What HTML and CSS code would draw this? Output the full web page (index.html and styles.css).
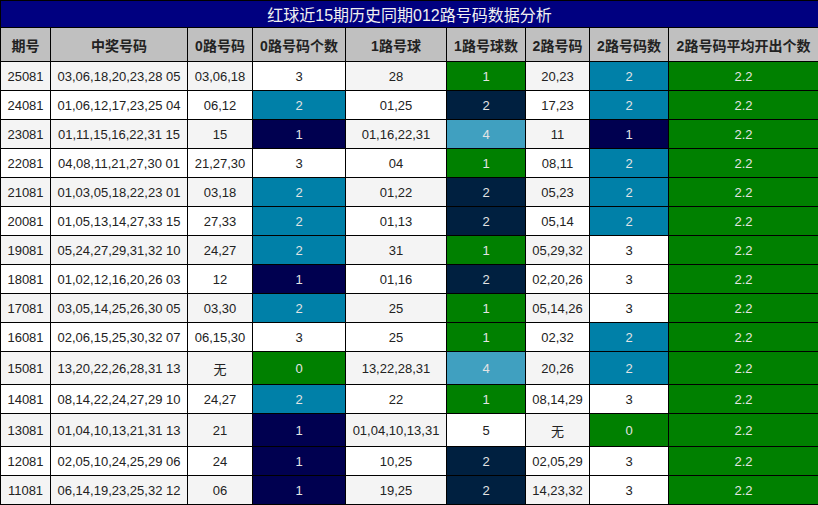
FILE: index.html
```html
<!DOCTYPE html>
<html>
<head>
<meta charset="utf-8">
<link rel="stylesheet" href="styles.css">
</head>
<body>
<table class="grid">
<colgroup>
<col class="w1"><col class="w2"><col class="w3"><col class="w4"><col class="w5"><col class="w6"><col class="w7"><col class="w8"><col class="w9">
</colgroup>
<thead>
<tr><th class="title" colspan="9">红球近15期历史同期012路号码数据分析</th></tr>
<tr class="head"><th>期号</th><th>中奖号码</th><th>0路号码</th><th>0路号码个数</th><th>1路号球</th><th>1路号球数</th><th>2路号码</th><th>2路号码数</th><th>2路号码平均开出个数</th></tr>
</thead>
<tbody>
<tr class="odd"><td>25081</td><td>03,06,18,20,23,28 05</td><td>03,06,18</td><td class="w">3</td><td>28</td><td class="g">1</td><td>20,23</td><td class="t">2</td><td class="g">2.2</td></tr>
<tr><td>24081</td><td>01,06,12,17,23,25 04</td><td>06,12</td><td class="t">2</td><td>01,25</td><td class="d">2</td><td>17,23</td><td class="t">2</td><td class="g">2.2</td></tr>
<tr class="odd"><td>23081</td><td>01,11,15,16,22,31 15</td><td>15</td><td class="n">1</td><td>01,16,22,31</td><td class="l">4</td><td>11</td><td class="n">1</td><td class="g">2.2</td></tr>
<tr><td>22081</td><td>04,08,11,21,27,30 01</td><td>21,27,30</td><td class="w">3</td><td>04</td><td class="g">1</td><td>08,11</td><td class="t">2</td><td class="g">2.2</td></tr>
<tr class="odd"><td>21081</td><td>01,03,05,18,22,23 01</td><td>03,18</td><td class="t">2</td><td>01,22</td><td class="d">2</td><td>05,23</td><td class="t">2</td><td class="g">2.2</td></tr>
<tr><td>20081</td><td>01,05,13,14,27,33 15</td><td>27,33</td><td class="t">2</td><td>01,13</td><td class="d">2</td><td>05,14</td><td class="t">2</td><td class="g">2.2</td></tr>
<tr class="odd"><td>19081</td><td>05,24,27,29,31,32 10</td><td>24,27</td><td class="t">2</td><td>31</td><td class="g">1</td><td>05,29,32</td><td class="w">3</td><td class="g">2.2</td></tr>
<tr><td>18081</td><td>01,02,12,16,20,26 03</td><td>12</td><td class="n">1</td><td>01,16</td><td class="d">2</td><td>02,20,26</td><td class="w">3</td><td class="g">2.2</td></tr>
<tr class="odd"><td>17081</td><td>03,05,14,25,26,30 05</td><td>03,30</td><td class="t">2</td><td>25</td><td class="g">1</td><td>05,14,26</td><td class="w">3</td><td class="g">2.2</td></tr>
<tr><td>16081</td><td>02,06,15,25,30,32 07</td><td>06,15,30</td><td class="w">3</td><td>25</td><td class="g">1</td><td>02,32</td><td class="t">2</td><td class="g">2.2</td></tr>
<tr class="odd"><td>15081</td><td>13,20,22,26,28,31 13</td><td>无</td><td class="g">0</td><td>13,22,28,31</td><td class="l">4</td><td>20,26</td><td class="t">2</td><td class="g">2.2</td></tr>
<tr><td>14081</td><td>08,14,22,24,27,29 10</td><td>24,27</td><td class="t">2</td><td>22</td><td class="g">1</td><td>08,14,29</td><td class="w">3</td><td class="g">2.2</td></tr>
<tr class="odd"><td>13081</td><td>01,04,10,13,21,31 13</td><td>21</td><td class="n">1</td><td>01,04,10,13,31</td><td class="w">5</td><td>无</td><td class="g">0</td><td class="g">2.2</td></tr>
<tr><td>12081</td><td>02,05,10,24,25,29 06</td><td>24</td><td class="n">1</td><td>10,25</td><td class="d">2</td><td>02,05,29</td><td class="w">3</td><td class="g">2.2</td></tr>
<tr class="odd"><td>11081</td><td>06,14,19,23,25,32 12</td><td>06</td><td class="n">1</td><td>19,25</td><td class="d">2</td><td>14,23,32</td><td class="w">3</td><td class="g">2.2</td></tr>
</tbody>
</table>
</body>
</html>
```

FILE: styles.css
```css
html, body {
  margin: 0;
  padding: 0;
  background: #ffffff;
}
.grid {
  border-collapse: collapse;
  table-layout: fixed;
  width: 818px;
  font-family: "Liberation Sans", "Noto Sans CJK SC", sans-serif;
  font-size: 13px;
  color: #222222;
}
.w1 { width: 50px; }
.w2 { width: 137px; }
.w3 { width: 65px; }
.w4 { width: 93px; }
.w5 { width: 101px; }
.w6 { width: 79px; }
.w7 { width: 64px; }
.w8 { width: 79px; }
.w9 { width: 150px; }
.grid th, .grid td {
  border: 1px solid #000000;
  text-align: center;
  padding: 7px 0 6px;
  white-space: nowrap;
  overflow: hidden;
}
.grid .title {
  background: #000080;
  color: #f0f0f0;
  font-weight: normal;
  font-size: 16px;
  padding: 1px 0 1px;
}
.head th {
  background: #c0c0c0;
  color: #222222;
  font-size: 14px;
  font-weight: bold;
  padding: 7px 0 6px;
}
tbody tr td { background: #ffffff; }
tbody tr.odd td { background: #f4f4f4; }
tbody tr td.w { background: #ffffff; }
tbody tr td.g { background: #008000; color: #e4e4e4; }
tbody tr td.n { background: #000050; color: #e4e4e4; }
tbody tr td.t { background: #0080a8; color: #e4e4e4; }
tbody tr td.d { background: #002040; color: #e4e4e4; }
tbody tr td.l { background: #40a0c0; color: #e4e4e4; }
```
